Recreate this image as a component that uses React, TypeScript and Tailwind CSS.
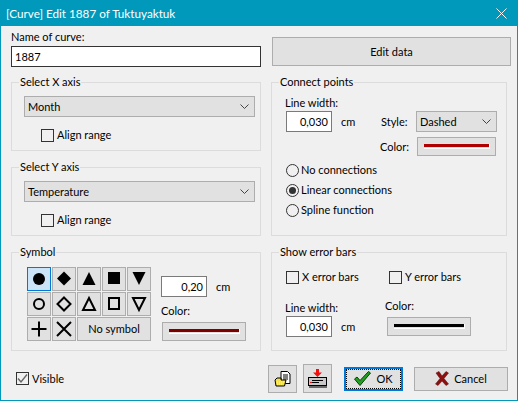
const font = "font-['Lato','Noto_Sans','Liberation_Sans',sans-serif]";

function GroupBox({ title, className, children }: { title: string; className: string; children: React.ReactNode }) {
  return (
    <div className={`relative border border-[#dcdcdc] ${className}`}>
      <span className="absolute left-[7px] top-[-9px] h-4 bg-[#f0f0f0] pl-[1px] pr-[1px] leading-4">{title}</span>
      {children}
    </div>
  );
}

function Check({ label, checked, className = "" }: { label: string; checked?: boolean; className?: string }) {
  return (
    <div className={`flex h-4 items-center ${className}`}>
      <div className="flex h-[13px] w-[13px] items-center justify-center border border-[#333] bg-transparent">
        {checked && (
          <svg width="11" height="11" viewBox="0 0 11 11">
            <path d="M1 5.5 L4 9 L10 1.5" fill="none" stroke="#666" strokeWidth="1.4" />
          </svg>
        )}
      </div>
      <span className="ml-[3px] leading-4">{label}</span>
    </div>
  );
}

function Radio({ label, checked }: { label: string; checked?: boolean }) {
  return (
    <div className="flex h-5 items-center">
      <div className="flex h-[13px] w-[13px] items-center justify-center rounded-full border border-[#333]">
        {checked && <div className="h-[7px] w-[7px] rounded-full bg-[#333]" />}
      </div>
      <span className="ml-[2px] leading-4">{label}</span>
    </div>
  );
}

function Combo({ value, className }: { value: string; className: string }) {
  return (
    <div className={`flex h-[21px] items-center justify-between border border-[#adadad] bg-[#e1e1e1] pl-[3px] pr-[5px] ${className}`}>
      <span className="leading-4">{value}</span>
      <svg width="9" height="6" viewBox="0 0 9 6">
        <path d="M0.5 0.5 L4.5 4.5 L8.5 0.5" fill="none" stroke="#444" strokeWidth="1" />
      </svg>
    </div>
  );
}

function NumInput({ value }: { value: string }) {
  return (
    <div className="flex h-[21px] w-[46px] items-center justify-end border border-[#7a7a7a] bg-white pr-[3px] leading-4">
      {value}
    </div>
  );
}

function ColorButton({ color, className }: { color: string; className: string }) {
  return (
    <div className={`flex h-[19px] items-center border border-[#adadad] bg-[#e1e1e1] pl-[6px] pr-[5px] ${className}`}>
      <div className="h-[5px] w-full border-b border-r border-white">
        <div className="h-[3px] w-full" style={{ background: color }} />
      </div>
    </div>
  );
}

function SymbolButton({ active, children }: { active?: boolean; children: React.ReactNode }) {
  return (
    <div
      className={`flex h-6 w-6 items-center justify-center border ${
        active ? "border-[#0078d7] bg-[#cce4f7]" : "border-[#adadad] bg-[#e1e1e1]"
      }`}
    >
      <svg width="22" height="22" viewBox="0 0 22 22">
        {children}
      </svg>
    </div>
  );
}

export default function App() {
  return (
    <div className={`h-[401px] w-[518px] overflow-hidden border-x border-b border-[#0099bc] bg-[#f0f0f0] text-[11px] text-black ${font}`}>
      {/* Title bar */}
      <div className="flex h-[26px] items-center justify-between bg-[#0099bc] pl-[5px] pr-[10px] text-white">
        <span className="text-[11.7px] leading-4">[Curve] Edit 1887 of Tuktuyaktuk</span>
        <svg width="11" height="11" viewBox="0 0 11 11">
          <path d="M0.5 0.5 L10.5 10.5 M10.5 0.5 L0.5 10.5" stroke="#fff" strokeWidth="1" fill="none" />
        </svg>
      </div>

      <div className="pl-[10px]">
        <div className="flex">
          {/* Left column */}
          <div className="w-[250px]">
            <div className="mt-[3px] h-4 leading-4">Name of curve:</div>
            <div className="mt-[1px] flex h-[21px] items-center border border-[#333] bg-white pl-[3px] leading-4">1887</div>

            <GroupBox title="Select X axis" className="mt-[15px] h-[69px] pl-[12px] pt-[13px]">
              <Combo value="Month" className="w-[231px]" />
              <Check label="Align range" className="ml-[17px] mt-[10px]" />
            </GroupBox>

            <GroupBox title="Select Y axis" className="mt-4 h-[69px] pl-[12px] pt-[13px]">
              <Combo value="Temperature" className="w-[231px]" />
              <Check label="Align range" className="ml-[17px] mt-[10px]" />
            </GroupBox>

            <GroupBox title="Symbol" className="mt-4 flex h-[99px] pl-[15px] pt-[14px]">
              <div className="grid grid-cols-[repeat(5,24px)] grid-rows-[repeat(3,24px)] gap-[1px]">
                <SymbolButton active><circle cx="11" cy="11" r="6" fill="#000" /></SymbolButton>
                <SymbolButton><path d="M11 3.5 L18 10.5 L11 17.5 L4 10.5 Z" fill="#000" /></SymbolButton>
                <SymbolButton><path d="M11 4 L17.5 17 L4.5 17 Z" fill="#000" /></SymbolButton>
                <SymbolButton><rect x="5" y="4" width="12" height="12" fill="#000" /></SymbolButton>
                <SymbolButton><path d="M4.5 4 L17.5 4 L11 17 Z" fill="#000" /></SymbolButton>
                <SymbolButton><circle cx="11" cy="11" r="5" fill="none" stroke="#000" strokeWidth="2" /></SymbolButton>
                <SymbolButton><path d="M11 4.5 L17.5 11 L11 17.5 L4.5 11 Z" fill="none" stroke="#000" strokeWidth="2" /></SymbolButton>
                <SymbolButton><path d="M11 5 L17 17 L5 17 Z" fill="none" stroke="#000" strokeWidth="2" /></SymbolButton>
                <SymbolButton><rect x="6" y="5" width="10" height="11" fill="none" stroke="#000" strokeWidth="2" /></SymbolButton>
                <SymbolButton><path d="M5 5 L17 5 L11 17 Z" fill="none" stroke="#000" strokeWidth="2" /></SymbolButton>
                <SymbolButton><path d="M3.5 11 L18.5 11 M11 3.5 L11 18.5" stroke="#000" strokeWidth="2" /></SymbolButton>
                <SymbolButton><path d="M4 4 L18 18 M18 4 L4 18" stroke="#000" strokeWidth="2" /></SymbolButton>
                <div className="col-span-3 flex items-center justify-center border border-[#adadad] bg-[#e1e1e1] leading-4">No symbol</div>
              </div>
              <div className="ml-[10px] pt-[9px]">
                <div className="flex items-center">
                  <NumInput value="0,20" />
                  <span className="ml-[9px] leading-4">cm</span>
                </div>
                <div className="mt-[6px] h-4 leading-4">Color:</div>
                <ColorButton color="#800000" className="ml-[1px] mt-[3px] w-[84px]" />
              </div>
            </GroupBox>
          </div>

          {/* Right column */}
          <div className="ml-[10px] w-[236px]">
            <div className="ml-[1px] mt-[11px] flex h-[29px] w-[239px] items-center justify-center border border-[#adadad] bg-[#e1e1e1] leading-4">
              Edit data
            </div>

            <GroupBox title="Connect points" className="mt-4 h-[154px] pl-[13px] pt-[12px]">
              <div className="h-4 leading-4">Line width:</div>
              <div className="ml-[1px] flex items-center">
                <NumInput value="0,030" />
                <span className="ml-[9px] w-[40px] leading-4">cm</span>
                <span className="w-[35px] leading-4">Style:</span>
                <Combo value="Dashed" className="w-[81px]" />
              </div>
              <div className="mt-[5px] flex items-center">
                <span className="ml-[95px] w-[37px] leading-4">Color:</span>
                <ColorButton color="#b00000" className="w-[79px]" />
              </div>
              <div className="ml-[1px] mt-[4px]">
                <Radio label="No connections" />
                <Radio label="Linear connections" checked />
                <Radio label="Spline function" />
              </div>
            </GroupBox>

            <GroupBox title="Show error bars" className="mt-4 h-[99px] pl-[14px] pt-[16px]">
              <div className="flex">
                <Check label="X error bars" className="w-[103px]" />
                <Check label="Y error bars" />
              </div>
              <div className="mt-[13px] flex">
                <div className="w-[101px] pt-[2px]">
                  <div className="-ml-[1px] h-4 leading-4">Line width:</div>
                  <div className="flex items-center">
                    <NumInput value="0,030" />
                    <span className="ml-[9px] leading-4">cm</span>
                  </div>
                </div>
                <div>
                  <div className="-ml-[2px] h-4 leading-4">Color:</div>
                  <ColorButton color="#000000" className="mt-[3px] w-[84px]" />
                </div>
              </div>
            </GroupBox>
          </div>
        </div>

        {/* Bottom row */}
        <div className="mt-[13px] flex h-[29px] items-center">
          <Check label="Visible" checked className="ml-[5px] w-[252px]" />
          <div className="flex h-[28px] w-[29px] items-center justify-center border border-[#adadad] bg-[#e1e1e1]">
            <svg width="18" height="18" viewBox="0 0 18 18">
              <path d="M7 1.5 H13.5 L16 4 V13.5 H7 Z" fill="#fff" stroke="#000" />
              <path d="M9 5 H14 M9 7 H14 M9 9 H14" stroke="#000" />
              <path d="M1 10 L3 8 H7 V10 H12 L10.5 16 H2 Z" fill="#f4e04d" stroke="#000" />
              <path d="M3 12 H10 M3 14 H9" stroke="#fff9b0" strokeDasharray="1 1" />
            </svg>
          </div>
          <div className="ml-[6px] flex h-[29px] w-[29px] items-center justify-center border border-[#adadad] bg-[#e1e1e1]">
            <svg width="21" height="21" viewBox="0 0 21 21">
              <path d="M9 1 H12 V4.5 H15 L10.5 9 L6 4.5 H9 Z" fill="#f01010" />
              <rect x="1.5" y="9.5" width="18" height="8" fill="#c8c8c8" stroke="#000" />
              <path d="M5 12.5 H16 M5 14.5 H12" stroke="#000" />
              <rect x="2" y="18" width="18" height="2" fill="#666" />
              <rect x="3" y="14" width="2" height="1" fill="#f01010" />
            </svg>
          </div>
          <div className="ml-[12px] flex h-[24px] w-[59px] items-center justify-center border-2 border-[#0078d7] bg-[#e1e1e1] outline-1 -outline-offset-3 outline-dotted outline-black">
            <svg width="17" height="15" viewBox="0 0 17 15">
              <path d="M0.5 8 L3 6 L6 9.5 L14.5 0.5 L16.5 2 L6 14.5 Z" fill="#1fa01f" stroke="#0a3d0a" strokeWidth="1" />
            </svg>
            <span className="ml-[5px] leading-4">OK</span>
          </div>
          <div className="ml-[11px] flex h-[24px] w-[94px] items-center justify-center border border-[#adadad] bg-[#e1e1e1]">
            <svg width="14" height="15" viewBox="0 0 14 15">
              <path d="M1 2 L4 0.5 L7 5 L11 0.5 L13.5 2 L9 7.5 L13.5 13 L11 14.5 L7 10 L3 14.5 L0.5 13 L5 7.5 Z" fill="#8b1010" stroke="#5a0a0a" strokeWidth="0.5" />
            </svg>
            <span className="ml-[5px] leading-4">Cancel</span>
          </div>
        </div>
      </div>
    </div>
  );
}
